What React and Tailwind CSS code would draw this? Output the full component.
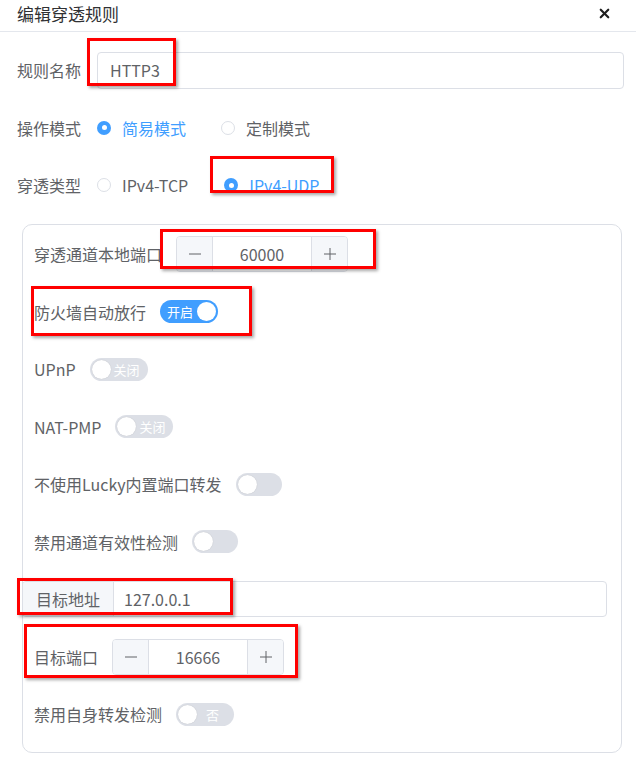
import { X } from 'lucide-react'

const FONT = "font-['Noto_Sans_CJK_SC','Noto_Sans',sans-serif]"

function Radio({ checked, label, className = '' }) {
  return (
    <div className={`flex items-center ${className}`}>
      {checked ? (
        <span className="w-[14px] h-[14px] rounded-full bg-[#409eff] flex items-center justify-center">
          <span className="w-[5px] h-[5px] rounded-full bg-white" />
        </span>
      ) : (
        <span className="w-[14px] h-[14px] rounded-full border border-[#dcdfe6] bg-white" />
      )}
      <span className={`ml-[11px] text-[16px] ${checked ? 'text-[#409eff]' : 'text-[#606266]'}`}>{label}</span>
    </div>
  )
}

function Switch({ on, text, wide = true, textClass = 'ml-[24px]' }) {
  return (
    <div
      className={`relative h-[23px] rounded-full flex items-center ${wide ? 'w-[58px]' : 'w-[46px]'} ${on ? 'bg-[#409eff]' : 'bg-[#dcdfe6]'}`}
    >
      {on ? (
        <>
          <span className="ml-[7px] text-[13px] text-white leading-none">{text}</span>
          <span className="absolute right-[2px] top-[2px] w-[19px] h-[19px] rounded-full bg-white" />
        </>
      ) : (
        <>
          <span className="absolute left-[2px] top-[2px] w-[19px] h-[19px] rounded-full bg-white shadow-[0_0_1px_rgba(0,0,0,0.2)]" />
          {text && <span className={`${textClass} text-[13px] text-white leading-none`}>{text}</span>}
        </>
      )}
    </div>
  )
}

function Stepper({ value }) {
  return (
    <div className="flex h-[36px] w-[172px] border border-[#dcdfe6] rounded-[4px] overflow-hidden">
      <div className="w-[36px] bg-[#f5f7fa] border-r border-[#dcdfe6] flex items-center justify-center">
        <svg width="14" height="14" viewBox="0 0 14 14" stroke="#606266" strokeWidth="1">
          <line x1="1" y1="7" x2="13" y2="7" />
        </svg>
      </div>
      <div className="flex-1 flex items-center justify-center text-[16px] text-[#606266]">{value}</div>
      <div className="w-[36px] bg-[#f5f7fa] border-l border-[#dcdfe6] flex items-center justify-center">
        <svg width="14" height="14" viewBox="0 0 14 14" stroke="#606266" strokeWidth="1">
          <line x1="1" y1="7" x2="13" y2="7" />
          <line x1="7" y1="1" x2="7" y2="13" />
        </svg>
      </div>
    </div>
  )
}

function Row({ label, children }) {
  return (
    <div className="h-[36px] flex items-center">
      <span className="text-[16px] text-[#606266] mr-[14px] whitespace-nowrap">{label}</span>
      {children}
    </div>
  )
}

// red annotation boxes drawn over the screenshot
const MARKS = [
  'left-[87px] top-[38px] w-[89px] h-[48px]',
  'left-[210px] top-[156px] w-[124px] h-[37px]',
  'left-[160px] top-[229px] w-[216px] h-[40px]',
  'left-[31px] top-[286px] w-[221px] h-[50px]',
  'left-[17px] top-[578px] w-[216px] h-[37px]',
  'left-[24px] top-[624px] w-[274px] h-[54px]',
]

export default function App() {
  return (
    <div className={`relative w-[636px] h-[763px] bg-white overflow-hidden ${FONT}`}>
      {/* header */}
      <div className="h-[32px] pb-[4px] border-b border-[#e4e7ed] flex items-center justify-between pl-[17px] pr-[24px]">
        <span className="text-[17px] text-[#303133]">编辑穿透规则</span>
        <X size={15} strokeWidth={3.5} className="text-[#1f1f1f]" />
      </div>

      <div className="pt-[20px] pl-[17px] pr-[12px]">
        <div className="flex flex-col gap-[21.5px]">
          <div className="h-[36px] flex items-center">
            <span className="w-[80px] text-[16px] text-[#606266]">规则名称</span>
            <div className="flex-1 h-[37px] border border-[#dcdfe6] rounded-[4px] flex items-center pl-[12px] text-[16px] text-[#606266]">
              HTTP3
            </div>
          </div>
          <div className="h-[36px] flex items-center">
            <span className="w-[80px] text-[16px] text-[#606266]">操作模式</span>
            <Radio checked label="简易模式" className="mr-[35px]" />
            <Radio label="定制模式" />
          </div>
          <div className="h-[36px] flex items-center">
            <span className="w-[80px] text-[16px] text-[#606266]">穿透类型</span>
            <Radio label="IPv4-TCP" className="mr-[36px]" />
            <Radio checked label="IPv4-UDP" />
          </div>
        </div>

        {/* detail card */}
        <div className="mt-[21px] ml-[5px] mr-[2px] border border-[#dcdfe6] rounded-[10px] pt-[11px] pb-[20px] pl-[11px] flex flex-col gap-[21.5px]">
          <Row label="穿透通道本地端口">
            <Stepper value="60000" />
          </Row>
          <Row label="防火墙自动放行">
            <Switch on text="开启" />
          </Row>
          <Row label="UPnP">
            <Switch text="关闭" />
          </Row>
          <Row label="NAT-PMP">
            <Switch text="关闭" />
          </Row>
          <Row label="不使用Lucky内置端口转发">
            <Switch wide={false} />
          </Row>
          <Row label="禁用通道有效性检测">
            <Switch wide={false} />
          </Row>
          <div className="h-[36px] -ml-[12px] mr-[14px] flex border border-[#dcdfe6] rounded-[4px] overflow-hidden">
            <div className="w-[91px] bg-[#f5f7fa] border-r border-[#dcdfe6] flex items-center justify-center text-[16px] text-[#606266]">
              目标地址
            </div>
            <div className="flex-1 flex items-center pl-[10px] text-[16px] text-[#606266]">127.0.0.1</div>
          </div>
          <Row label="目标端口">
            <Stepper value="16666" />
          </Row>
          <Row label="禁用自身转发检测">
            <Switch text="否" textClass="ml-[30px]" />
          </Row>
        </div>
      </div>

      {MARKS.map((m) => (
        <div
          key={m}
          className={`absolute ${m} border-[3px] border-[#ff0000] shadow-[2px_2px_3px_rgba(0,0,0,0.35)] pointer-events-none`}
        />
      ))}
    </div>
  )
}
